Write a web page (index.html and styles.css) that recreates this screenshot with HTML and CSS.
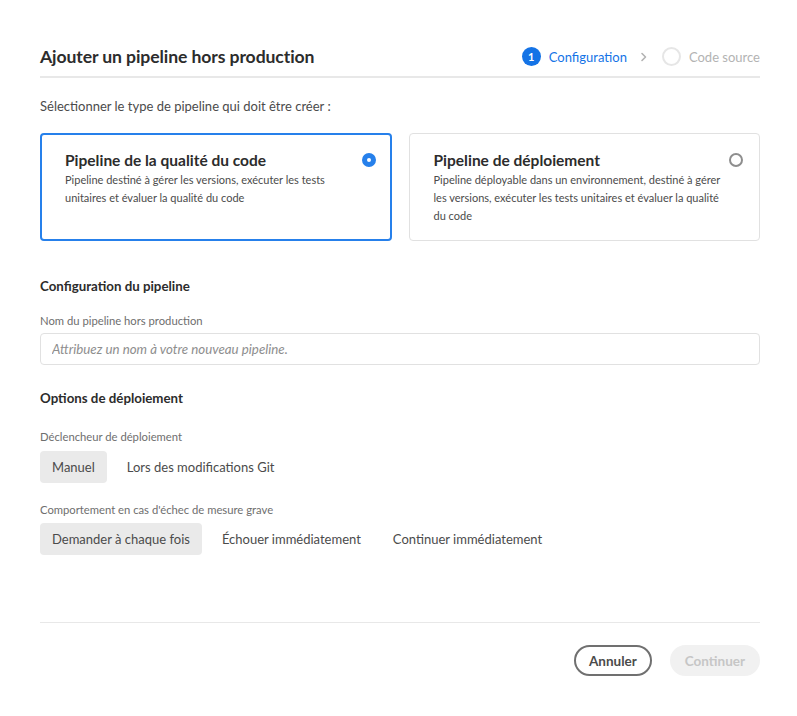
FILE: index.html
```html
<!DOCTYPE html>
<html lang="fr">
<head>
<meta charset="utf-8">
<title>Ajouter un pipeline hors production</title>
<link rel="stylesheet" href="styles.css">
</head>
<body>
<div class="dialog">
  <header class="header">
    <h1 class="title">Ajouter un pipeline hors production</h1>
    <ol class="steps">
      <li class="step step-active"><span class="step-dot">1</span><span class="step-label">Configuration</span></li>
      <li class="step-chevron"><svg width="8" height="10" viewBox="0 0 8 10"><path d="M2 1.5 L5.5 5 L2 8.5" fill="none" stroke="#b3b3b3" stroke-width="1.6" stroke-linecap="round" stroke-linejoin="round"/></svg></li>
      <li class="step step-next"><span class="step-dot"></span><span class="step-label">Code source</span></li>
    </ol>
  </header>

  <p class="intro">Sélectionner le type de pipeline qui doit être créer :</p>

  <div class="cards">
    <div class="card card-selected">
      <div class="card-body">
        <div class="card-title">Pipeline de la qualité du code</div>
        <div class="card-desc">Pipeline destiné à gérer les versions, exécuter les tests unitaires et évaluer la qualité du code</div>
      </div>
      <span class="radio radio-on"></span>
    </div>
    <div class="card">
      <div class="card-body">
        <div class="card-title">Pipeline de déploiement</div>
        <div class="card-desc">Pipeline déployable dans un environnement, destiné à gérer les versions, exécuter les tests unitaires et évaluer la qualité du code</div>
      </div>
      <span class="radio"></span>
    </div>
  </div>

  <h2 class="section-title section-config">Configuration du pipeline</h2>
  <label class="field-label field-label-name">Nom du pipeline hors production</label>
  <input class="text-input" type="text" placeholder="Attribuez un nom à votre nouveau pipeline.">

  <h2 class="section-title section-options">Options de déploiement</h2>
  <div class="field-label field-label-trigger">Déclencheur de déploiement</div>
  <div class="segmented">
    <span class="seg seg-on">Manuel</span>
    <span class="seg">Lors des modifications Git</span>
  </div>

  <div class="field-label field-label-behavior">Comportement en cas d'échec de mesure grave</div>
  <div class="segmented">
    <span class="seg seg-on">Demander à chaque fois</span>
    <span class="seg">Échouer immédiatement</span>
    <span class="seg">Continuer immédiatement</span>
  </div>

  <footer class="footer">
    <button class="btn btn-outline">Annuler</button>
    <button class="btn btn-disabled">Continuer</button>
  </footer>
</div>
</body>
</html>
```

FILE: styles.css
```css
* { box-sizing: border-box; }

body {
  margin: 0;
  background: #ffffff;
  font-family: "Lato", "Noto Sans", sans-serif;
  color: #4b4b4b;
}

.dialog {
  width: 720px;
  margin-left: 40px;
  padding-top: 40px;
}

.header {
  display: flex;
  align-items: center;
  justify-content: space-between;
  height: 38px;
  padding-bottom: 3px;
  border-bottom: 2px solid #e8e8e8;
}

.title {
  margin: 0;
  font-size: 17.6px;
  font-weight: 700;
  color: #2c2c2c;
  letter-spacing: -0.1px;
}

.steps {
  display: flex;
  align-items: center;
  list-style: none;
  margin: 0;
  padding: 0;
  font-size: 13px;
}

.step {
  display: flex;
  align-items: center;
  gap: 8px;
}

.step-dot {
  width: 19px;
  height: 19px;
  border-radius: 50%;
  display: flex;
  align-items: center;
  justify-content: center;
  font-size: 11px;
  font-weight: 700;
}

.step-active .step-dot {
  background: #1473e6;
  color: #ffffff;
}

.step-active .step-label { color: #1473e6; }

.step-chevron {
  display: flex;
  margin: 0 14px 0 13px;
}

.step-next .step-dot {
  border: 2px solid #e6e6e6;
}

.step-next .step-label { color: #b3b3b3; }

.intro {
  margin: 18px 0 0;
  font-size: 13px;
  line-height: 20px;
  color: #4b4b4b;
}

.cards {
  display: grid;
  grid-template-columns: 1fr 1fr;
  gap: 17px;
  margin-top: 17px;
}

.card {
  display: flex;
  align-items: flex-start;
  height: 108px;
  border: 1px solid #e1e1e1;
  border-radius: 4px;
  padding: 17px 16px 0 24px;
}

.card-selected {
  border: 2px solid #2680eb;
  padding: 16px 14px 0 23px;
}

.card-body { flex: 1; }

.card-title {
  font-size: 15.5px;
  font-weight: 700;
  line-height: 18px;
  color: #2c2c2c;
  margin-bottom: 2px;
}

.card-desc {
  font-size: 11px;
  line-height: 18px;
  color: #4b4b4b;
}

.radio {
  flex: none;
  width: 14px;
  height: 14px;
  margin: 2px 0 0 2px;
  border-radius: 50%;
  border: 2px solid #8e8e8e;
}

.radio-on {
  border: 5px solid #2680eb;
  background: #ffffff;
}

.section-title {
  margin: 0;
  font-size: 13.3px;
  font-weight: 700;
  line-height: 20px;
  color: #2c2c2c;
}

.section-config { margin-top: 35px; }
.section-options { margin-top: 23px; }

.field-label {
  display: block;
  font-size: 11.25px;
  line-height: 16px;
  color: #6e6e6e;
}

.field-label-name { margin: 17px 0 4px; }
.field-label-trigger { margin: 21px 0 6px; }
.field-label-behavior { margin: 19px 0 5px; }

.text-input {
  display: block;
  width: 100%;
  height: 32px;
  border: 1px solid #e1e1e1;
  border-radius: 4px;
  padding: 0 11px;
  font-family: inherit;
  font-size: 13.3px;
  color: #4b4b4b;
  outline: none;
}

.text-input::placeholder {
  font-style: italic;
  color: #8e8e8e;
}

.segmented {
  display: flex;
  gap: 8px;
}

.seg {
  height: 32px;
  padding: 0 12px;
  display: flex;
  align-items: center;
  font-size: 13px;
  color: #4b4b4b;
  border-radius: 4px;
}

.seg-on { background: #eaeaea; }

.footer {
  margin-top: 67px;
  border-top: 1px solid #e8e8e8;
  padding-top: 22px;
  display: flex;
  justify-content: flex-end;
  gap: 18px;
}

.btn {
  height: 31px;
  border-radius: 16px;
  font-family: inherit;
  font-size: 13.5px;
  font-weight: 700;
  padding: 0 13px;
  cursor: pointer;
}

.btn-outline {
  background: #ffffff;
  border: 2px solid #707070;
  color: #4b4b4b;
}

.btn-disabled {
  background: #f1f1f1;
  border: 2px solid #f1f1f1;
  color: #c6c6c6;
}
```
